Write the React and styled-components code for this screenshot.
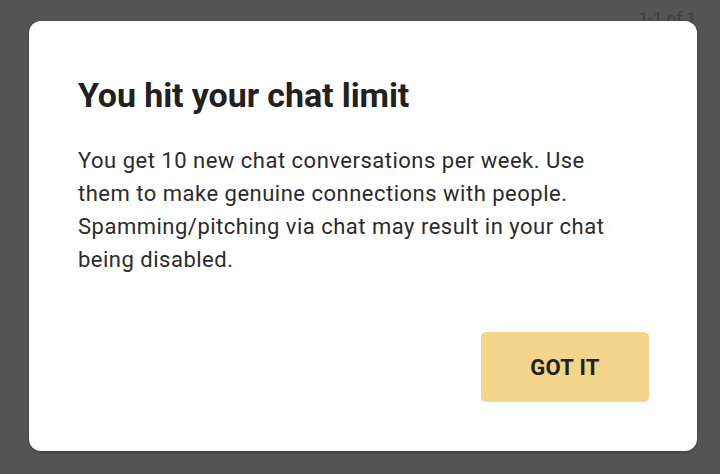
import styled, { createGlobalStyle } from "styled-components";

const GlobalStyle = createGlobalStyle`
  html, body {
    margin: 0;
    padding: 0;
    background: #545454;
  }
  body {
    font-family: Roboto, "Liberation Sans", sans-serif;
  }
`;

const Backdrop = styled.div`
  position: relative;
  width: 720px;
  height: 474px;
  background: #545454;
  padding: 21px 23px 23px 29px;
  box-sizing: border-box;
  overflow: hidden;
`;

const PageCount = styled.span`
  position: absolute;
  top: 8px;
  right: 24px;
  font-size: 17px;
  color: #3f3f3f;
`;

const Dialog = styled.div`
  position: relative;
  height: 430px;
  background: #fff;
  border-radius: 12px;
  box-shadow: 0 1px 3px rgba(0, 0, 0, 0.3);
  padding: 53px 48px 49px 49px;
  box-sizing: border-box;
  display: flex;
  flex-direction: column;
`;

const Title = styled.h2`
  margin: 0;
  font-size: 34px;
  font-weight: 700;
  color: #212121;
  line-height: 42px;
  letter-spacing: -0.1px;
`;

const Body = styled.p`
  margin: 28px 0 0;
  max-width: 548px;
  font-size: 22px;
  line-height: 33px;
  letter-spacing: 0.5px;
  color: #2b2b2b;
`;

const Actions = styled.div`
  margin-top: auto;
  display: flex;
  justify-content: flex-end;
`;

const Button = styled.button`
  width: 168px;
  height: 70px;
  border: none;
  border-radius: 5px;
  background: #f2d58b;
  color: #212121;
  font-family: Roboto, "Liberation Sans", sans-serif;
  font-size: 22px;
  font-weight: 700;
  letter-spacing: 0.3px;
  cursor: pointer;
`;

export default function App() {
  return (
    <>
      <GlobalStyle />
      <Backdrop>
        <PageCount>1-1 of 1</PageCount>
        <Dialog>
          <Title>You hit your chat limit</Title>
          <Body>
            You get 10 new chat conversations per week. Use them to make
            genuine connections with people. Spamming/pitching via chat may
            result in your chat being disabled.
          </Body>
          <Actions>
            <Button>GOT IT</Button>
          </Actions>
        </Dialog>
      </Backdrop>
    </>
  );
}
